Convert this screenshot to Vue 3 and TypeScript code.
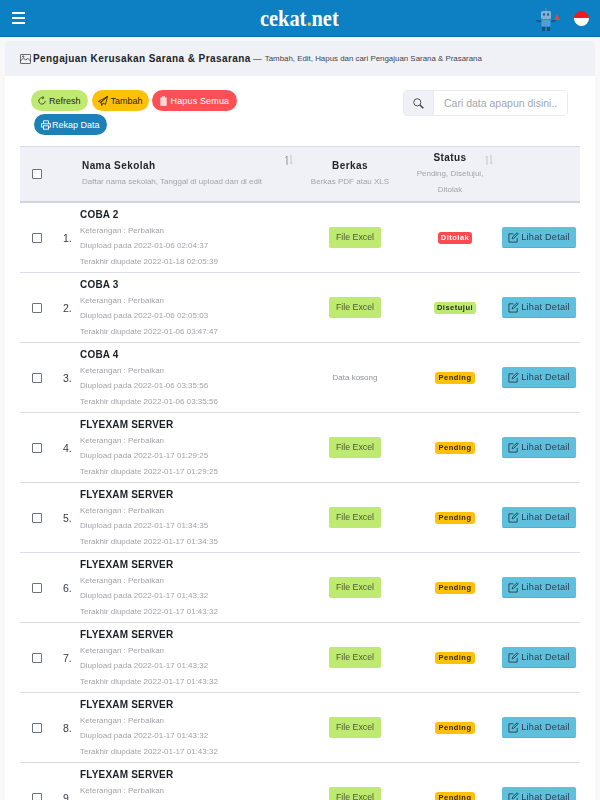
<script setup lang="ts">
interface Row {
  name: string
  uploaded: string
  updated: string
  file: boolean
  status: 'Ditolak' | 'Disetujui' | 'Pending'
}

const rows: Row[] = [
  { name: 'COBA 2', uploaded: '2022-01-06 02:04:37', updated: '2022-01-18 02:05:39', file: true, status: 'Ditolak' },
  { name: 'COBA 3', uploaded: '2022-01-06 02:05:03', updated: '2022-01-06 03:47:47', file: true, status: 'Disetujui' },
  { name: 'COBA 4', uploaded: '2022-01-06 03:35:56', updated: '2022-01-06 03:35:56', file: false, status: 'Pending' },
  { name: 'FLYEXAM SERVER', uploaded: '2022-01-17 01:29:25', updated: '2022-01-17 01:29:25', file: true, status: 'Pending' },
  { name: 'FLYEXAM SERVER', uploaded: '2022-01-17 01:34:35', updated: '2022-01-17 01:34:35', file: true, status: 'Pending' },
  { name: 'FLYEXAM SERVER', uploaded: '2022-01-17 01:43:32', updated: '2022-01-17 01:43:32', file: true, status: 'Pending' },
  { name: 'FLYEXAM SERVER', uploaded: '2022-01-17 01:43:32', updated: '2022-01-17 01:43:32', file: true, status: 'Pending' },
  { name: 'FLYEXAM SERVER', uploaded: '2022-01-17 01:43:32', updated: '2022-01-17 01:43:32', file: true, status: 'Pending' },
  { name: 'FLYEXAM SERVER', uploaded: '2022-01-17 01:43:32', updated: '2022-01-17 01:43:32', file: true, status: 'Pending' },
]
</script>

<template>
  <div class="page">
    <nav class="navbar">
      <button class="burger" aria-label="Menu"><span></span><span></span><span></span></button>
      <div class="logo-wrap"><div class="logo">cekat<i>.</i>net</div></div>
      <div class="nav-right">
        <svg class="robot" width="22" height="24" viewBox="0 0 22 24">
          <path d="M1 12.5l5 1M21 12.5l-5 1" stroke="#1d4f78" stroke-width="1.4" />
          <rect x="10" y="0" width="2" height="3" fill="#3f86b8" />
          <rect x="6" y="3" width="10" height="8" rx="1.5" fill="#7fb2d3" />
          <rect x="8" y="5.5" width="2" height="2" fill="#24567f" />
          <rect x="12" y="5.5" width="2" height="2" fill="#24567f" />
          <rect x="6.5" y="11.5" width="9" height="7" fill="#4f9ed6" />
          <rect x="7" y="19" width="3" height="4" fill="#1d4f78" />
          <rect x="12" y="19" width="3" height="4" fill="#1d4f78" />
        </svg>
        <svg class="alert" width="6" height="6" viewBox="0 0 6 6"><path d="M3 0l3 6H0z" fill="#e8413f" /></svg>
        <div class="flag"></div>
      </div>
    </nav>

    <section class="card">
      <header class="card-head">
        <svg width="11" height="10" viewBox="0 0 11 10" fill="none" stroke="#333" stroke-width="0.8">
          <rect x="0.4" y="0.4" width="10.2" height="9.2" rx="0.8" />
          <path d="M0.4 7l3-3 2.4 2 2-1.6 2.8 2.6" />
          <circle cx="3.2" cy="2.5" r="0.7" />
        </svg>
        <strong>Pengajuan Kerusakan Sarana &amp; Prasarana</strong>
        <span class="dash">—</span>
        <small>Tambah, Edit, Hapus dan cari Pengajuan Sarana &amp; Prasarana</small>
      </header>

      <div class="tools">
        <div class="pills">
          <button class="pill green">
            <svg width="8" height="9" viewBox="0 0 10 11" fill="none" stroke="currentColor" stroke-width="1"><path d="M9 6A4 4 0 1 1 6.5 2.3" /><path d="M6 0.3L7.3 2.3 5.2 3.5" /></svg>
            Refresh
          </button>
          <button class="pill yellow">
            <svg width="10" height="10" viewBox="0 0 12 12" fill="none" stroke="currentColor" stroke-width="1"><path d="M11.5 0.5L0.5 6.5l3 1zM11.5 0.5L3.5 7.5l1 4 1.5-3M11.5 0.5L9 10 6 8.5" /></svg>
            Tambah
          </button>
          <button class="pill red">
            <svg width="7" height="10" viewBox="0 0 7 10"><path d="M0.3 1.5h6.4v7.5a1 1 0 0 1-1 1h-4.4a1 1 0 0 1-1-1zM2 0.3h3V1.5H2z" fill="#ffd5d5" /></svg>
            Hapus Semua
          </button>
          <button class="pill blue">
            <svg width="10" height="10" viewBox="0 0 12 11" fill="none" stroke="currentColor" stroke-width="1.1"><path d="M3 4V0.5h6V4M3 8H0.5V4h11v4H9" /><rect x="3" y="6.5" width="6" height="4" /></svg>
            Rekap Data
          </button>
        </div>
        <div class="search">
          <span class="search-icon">
            <svg width="11" height="11" viewBox="0 0 11 11" fill="none" stroke="#444" stroke-width="0.9"><circle cx="4.3" cy="4.3" r="3.6" /><path d="M7 7l3.3 3.3" stroke-width="1.6" /></svg>
          </span>
          <input type="text" placeholder="Cari data apapun disini.." />
        </div>
      </div>

      <div class="table">
        <div class="thead grid">
          <div class="cell-check"><span class="checkbox"></span></div>
          <div></div>
          <div class="th-name">
            <b>Nama Sekolah</b>
            <small>Daftar nama sekolah, Tanggal di upload dan di edit</small>
            <svg class="sort sort-name" width="8" height="10" viewBox="0 0 8 10" fill="none" stroke-width="1">
              <path d="M2 10V1M0.5 2.5L2 1" stroke="#8d9199" />
              <path d="M6 0v9M7.5 7.5L6 9" stroke="#c3c6cc" />
            </svg>
          </div>
          <div class="th-center">
            <b>Berkas</b>
            <small>Berkas PDF atau XLS</small>
          </div>
          <div class="th-center">
            <b>Status</b>
            <small>Pending, Disetujui, Ditolak</small>
            <svg class="sort sort-status" width="8" height="10" viewBox="0 0 8 10" fill="none" stroke-width="1">
              <path d="M2 10V1M0.5 2.5L2 1" stroke="#c3c6cc" />
              <path d="M6 0v9M7.5 7.5L6 9" stroke="#c3c6cc" />
            </svg>
          </div>
          <div></div>
        </div>

        <div v-for="(row, i) in rows" :key="i" class="tr grid">
          <div class="cell-check"><span class="checkbox"></span></div>
          <div class="num">{{ i + 1 }}.</div>
          <div class="info">
            <b>{{ row.name }}</b>
            <small>Keterangan : Perbaikan</small>
            <small>Diupload pada {{ row.uploaded }}</small>
            <small>Terakhir diupdate {{ row.updated }}</small>
          </div>
          <div class="center">
            <span v-if="row.file" class="file">File Excel</span>
            <small v-else class="empty">Data kosong</small>
          </div>
          <div class="center">
            <span class="badge" :class="row.status.toLowerCase()">{{ row.status }}</span>
          </div>
          <div class="center">
            <button class="detail">
              <svg width="11" height="11" viewBox="0 0 12 12" fill="none" stroke="#2c3e50" stroke-width="1"><path d="M10 6.5V11H1V2h5" /><path d="M4.5 7.5l.5-2L10 .8l1.2 1.2-5 4.9z" /></svg>
              Lihat Detail
            </button>
          </div>
        </div>
      </div>
    </section>
  </div>
</template>

<style>
html,
body {
  margin: 0;
  background: #f8f8f8;
  overflow: hidden;
}
</style>

<style scoped>
.page {
  height: 800px;
  overflow: hidden;
  font-family: "Liberation Sans", Arial, sans-serif;
  color: #212529;
  background: #f8f8f8;
}

.navbar {
  height: 36px;
  background: #0d80c4;
  border-bottom: 1px solid #0b6dab;
  display: flex;
  align-items: center;
  position: relative;
}

.burger {
  background: none;
  border: 0;
  padding: 0;
  margin-left: 12px;
  width: 13px;
  display: flex;
  flex-direction: column;
  gap: 3px;
}

.burger span {
  display: block;
  height: 2px;
  background: #fff;
}

.logo-wrap {
  flex: 1;
  display: flex;
  justify-content: center;
  padding-left: 39px;
}

.logo {
  font-family: "Liberation Serif", serif;
  font-weight: 700;
  font-size: 24px;
  line-height: 28px;
  color: #fff;
  transform: scaleX(0.85);
}

.logo i {
  color: #f7c325;
  font-style: normal;
}

.nav-right {
  display: flex;
  align-items: center;
  margin-right: 11px;
  position: relative;
}

.robot {
  margin-top: 4px;
}

.alert {
  position: absolute;
  left: 19px;
  top: 10px;
}

.flag {
  width: 15px;
  height: 15px;
  border-radius: 50%;
  margin-left: 17px;
  background: linear-gradient(#ed1c24 50%, #fff 50%);
}

.card {
  margin: 4px 5px 0;
  background: #fff;
  border-radius: 4px 4px 0 0;
}

.card-head {
  height: 35px;
  padding: 0 15px;
  background: #f0f1f6;
  border-radius: 4px 4px 0 0;
  display: flex;
  align-items: center;
  white-space: nowrap;
}

.card-head strong {
  padding-left: 2px;
  font-size: 10px;
  letter-spacing: 0.42px;
  color: #212529;
}

.dash {
  margin: 0 3px 0 2px;
  font-size: 9px;
}

.card-head small {
  font-size: 7.9px;
  color: #3f444b;
}

.tools {
  display: flex;
  justify-content: space-between;
  padding: 14px 26px 0;
  height: 56px;
}

.pills {
  display: flex;
  flex-wrap: wrap;
  gap: 3px 4px;
  width: 220px;
  align-content: flex-start;
}

.pill {
  height: 21px;
  padding: 0 7px;
  border-radius: 11px;
  border: 0;
  display: inline-flex;
  align-items: center;
  gap: 3px;
  font-family: inherit;
  font-size: 9px;
  white-space: nowrap;
}

.pill.green {
  background: #bfea72;
  color: #20281a;
}

.pill.yellow {
  padding: 0 6px;
  margin-right: -1px;
  background: #ffc107;
  color: #2b2400;
}

.pill.red {
  padding: 0 8px;
  gap: 4px;
  letter-spacing: 0.15px;
  background: #fc5055;
  color: #fff;
}

.pill.blue {
  margin-left: 3px;
  gap: 1px;
  background: #1d80b9;
  color: #fff;
}

.search {
  width: 165px;
  height: 26px;
  margin-right: 1px;
  display: flex;
  border: 1px solid #e9ebf2;
  border-radius: 4px;
  box-sizing: border-box;
}

.search-icon {
  width: 29px;
  background: #f0f1f6;
  display: flex;
  align-items: center;
  justify-content: center;
  border-right: 1px solid #e9ebf2;
}

.search input {
  flex: 1;
  min-width: 0;
  border: 0;
  padding: 0 0 0 10px;
  font-family: inherit;
  font-size: 10.5px;
  background: #fff;
  outline: none;
}

.search input::placeholder {
  color: #a3a7ae;
}

.table {
  margin: 0 15px;
  will-change: transform;
}

.grid {
  display: grid;
  grid-template-columns: 33px 27px 220px 110px 90px 78px;
}

.thead {
  height: 54px;
  background: #f0f1f6;
  border-top: 1px solid #dcdde8;
  border-bottom: 2px solid #d0d2de;
  align-items: center;
}

.cell-check {
  display: flex;
  align-items: center;
  justify-content: center;
}

.checkbox {
  width: 8px;
  height: 8px;
  border: 1.5px solid #6c717a;
  border-radius: 1px;
  background: #fff;
  display: block;
}

.th-name {
  position: relative;
  box-sizing: border-box;
  padding: 2px 0 0 2px;
  height: 100%;
  display: flex;
  flex-direction: column;
  justify-content: center;
}

.thead b {
  font-size: 10px;
  letter-spacing: 0.42px;
  color: #212529;
}

.thead small {
  font-size: 8px;
  color: #a3a3a8;
  line-height: 16px;
  margin-top: 3px;
}

.th-center {
  position: relative;
  box-sizing: border-box;
  padding: 2px 10px 0 0;
  text-align: center;
  display: flex;
  flex-direction: column;
  justify-content: center;
  align-items: center;
  height: 100%;
}

.sort {
  position: absolute;
  top: 8px;
}

.sort-name {
  left: 205px;
}

.sort-status {
  left: 75px;
}

.tr {
  height: 69px;
  border-bottom: 1px solid #dcdde8;
  align-items: center;
}

.num {
  font-size: 10.5px;
  padding-left: 10px;
  color: #343a40;
}

.info {
  display: flex;
  flex-direction: column;
  padding-top: 1px;
}

.info b {
  font-size: 10px;
  letter-spacing: 0.2px;
  line-height: 15.5px;
  color: #1b1f24;
}

.info small {
  font-size: 8px;
  line-height: 15.5px;
  color: #a3a3a8;
  white-space: nowrap;
}

.center {
  display: flex;
  justify-content: center;
  align-items: center;
}

.file {
  width: 52px;
  height: 21px;
  line-height: 21px;
  text-align: center;
  background: #bfea72;
  border-radius: 2px;
  font-size: 8.8px;
  color: #4a5a33;
}

.empty {
  font-size: 8px;
  color: #8d9199;
}

.badge {
  font-size: 7.5px;
  font-weight: 700;
  letter-spacing: 0.5px;
  line-height: 12px;
  padding: 0 3px;
  border-radius: 3px;
}

.badge.ditolak {
  background: #fc4a4f;
  color: #fff;
}

.badge.disetujui {
  background: #bfea72;
  color: #26301a;
}

.badge.pending {
  background: #ffc107;
  color: #332600;
}

.detail {
  width: 74px;
  height: 21px;
  padding: 0;
  background: #5fc0de;
  border: 0;
  border-bottom: 1px solid #4db1d0;
  border-radius: 2px;
  display: flex;
  align-items: center;
  justify-content: center;
  gap: 2px;
  font-family: inherit;
  font-size: 9.2px;
  letter-spacing: 0.2px;
  color: #2c3e50;
  white-space: nowrap;
}
</style>
